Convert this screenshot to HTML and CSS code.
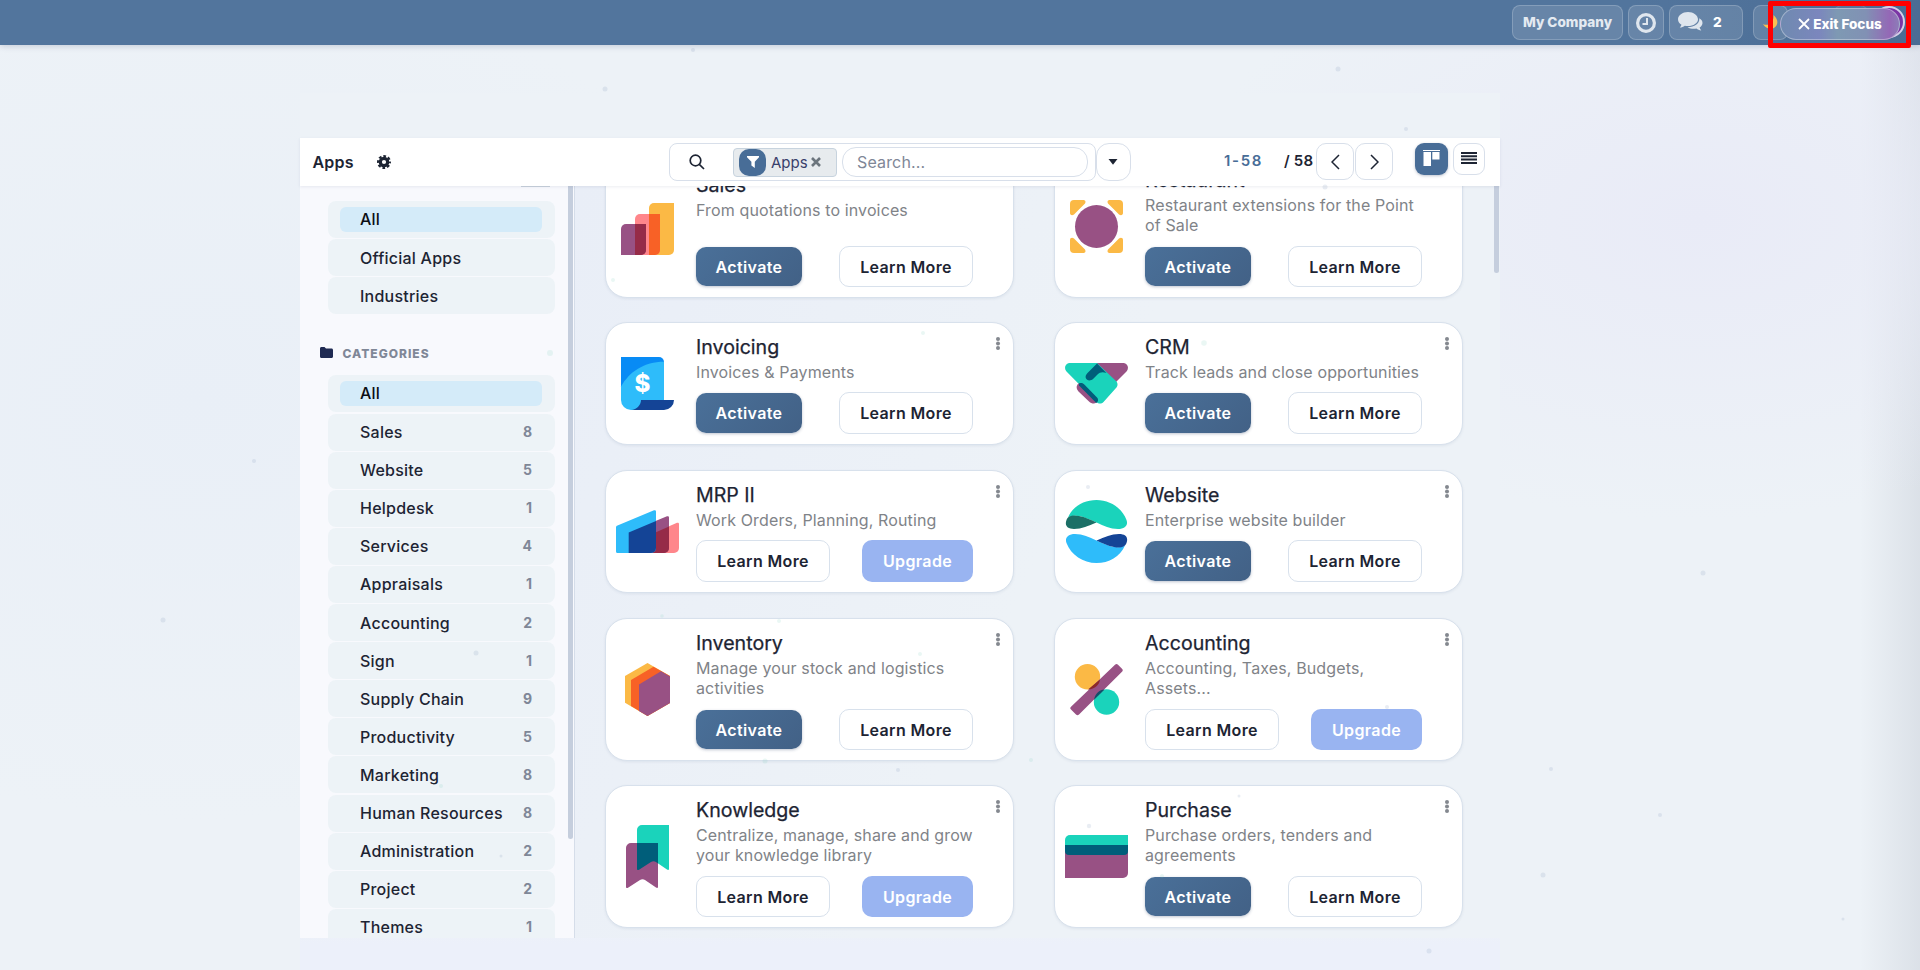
FILE: index.html
```
<!DOCTYPE html>
<html lang="en">
<head>
<meta charset="utf-8">
<title>Apps</title>
<link rel="stylesheet" href="styles.css">
</head>
<body>
<header class="topbar">
  <div class="tb company">My Company</div>
  <div class="tb clock"><svg width="22" height="22" viewBox="0 0 22 22" fill="none" stroke="#dfe6ee"><circle cx="11" cy="11" r="8.4" stroke-width="3.2"/><path d="M12 6v6H7.5" stroke-width="2"/></svg></div>
  <div class="tb chat"><svg width="25" height="20" viewBox="0 0 25 20" fill="#dfe6ee"><path d="M10 0C4.500 0 0 3.300 0 7.300c0 2.300 1.400 4.200 3.500 5.500-.4 1.200-1 2-1.700 2.700 2 0 3.700-.7 5-1.800 1 .2 2.100.4 3.200.4 5.500 0 10-3 10-6.800S15.500 0 10 0z"/><path d="M21.300 6.200c2 1.100 3.200 2.700 3.200 4.700 0 1.900-1.200 3.500-2.900 4.600.3 1 .9 2 1.700 2.900-2 0-3.600-.8-4.900-1.800-3.300.6-6.700 0-8.900-1.400 6.600.1 12.300-3.600 11.800-9z"/></svg><span>2</span></div>
  <div class="tb moon"><svg width="15" height="14" viewBox="0 0 15 14"><path d="M10.500 0c5 4 5.500 11-.5 13.400C6.500 14.600 2 13 0 9c5 2.500 11-.5 10.500-9z" fill="#f9c053"/></svg></div>
  <div class="tb ghost"></div>
  <div class="avatar"></div>
  <div class="exit"><svg width="12" height="12" viewBox="0 0 12 12" stroke="#fff" stroke-width="1.800"><path d="M1 1l10 10M11 1L1 11"/></svg>Exit Focus</div>
  <div class="redbox"></div>
</header>
<main class="stage">
  <div class="app">
    <div class="control">
      <div class="crumb">Apps</div>
      <svg class="cog" width="14" height="14" viewBox="0 0 14 14"><circle cx="7" cy="7" r="3.700" fill="none" stroke="#1d2433" stroke-width="3.200"/><circle cx="7" cy="7" r="5.900" fill="none" stroke="#1d2433" stroke-width="2.200" stroke-dasharray="2.700 1.934" stroke-dashoffset="1.350"/></svg>
      <div class="search">
        <svg class="lens" width="16" height="16" viewBox="0 0 16 16" fill="none" stroke="#1d2433" stroke-width="1.700"><circle cx="6.500" cy="6.500" r="5.300"/><path d="M10.300 10.300l4.700 4.700"/></svg>
        <div class="facet"><span class="funnel"><svg width="12" height="12" viewBox="0 0 12 12"><path d="M0 0h12v1.200L7.800 5.800V12L4.400 9.500V5.800L0 1.200z" fill="#fff"/></svg></span><span class="fname">Apps</span><svg width="10" height="10" viewBox="0 0 10 10" stroke="#6c757d" stroke-width="2.600"><path d="M1 1l8 8M9 1L1 9"/></svg></div>
        <div class="input">Search...</div>
      </div>
      <div class="drop"><svg width="10" height="6" viewBox="0 0 10 6"><path d="M.5 0h9L5 5.800z" fill="#1d2433"/></svg></div>
      <div class="range">1-58</div><div class="total">/ 58</div>
      <div class="nav"><svg width="9" height="16" viewBox="0 0 9 16" fill="none" stroke="#1d2433" stroke-width="1.500"><path d="M8 1L1 8l7 7"/></svg></div>
      <div class="nav"><svg width="9" height="16" viewBox="0 0 9 16" fill="none" stroke="#1d2433" stroke-width="1.500"><path d="M1 1l7 7-7 7"/></svg></div>
      <div class="view on"><svg width="17" height="16" viewBox="0 0 17 16" fill="#fff"><path d="M0 0h17v1H0zM.500 2h7.500v14H.500zM9.300 2h7.200v7.500H9.300z"/></svg></div>
      <div class="view"><svg width="16" height="12" viewBox="0 0 16 12" fill="#1d2433"><path d="M0 0h16v2H0zM0 3.300h16v2H0zM0 6.600h16v2H0zM0 10h16v2H0z"/></svg></div>
    </div>
    <div class="content">
      <aside class="side">
        <i class="edge"></i>
        <div class="cat on"><span>All</span></div>
        <div class="cat"><span>Official Apps</span></div>
        <div class="cat"><span>Industries</span></div>
        <div class="sec"><svg width="13" height="11" viewBox="0 0 13 11"><path d="M0 1.500C0 .6.600 0 1.500 0h3L6 1.500h5.500c.9 0 1.500.600 1.500 1.500v6.500c0 .9-.6 1.500-1.500 1.500h-10C.6 11 0 10.400 0 9.500z" fill="#1f2a52"/></svg>CATEGORIES</div>
        <div class="cat on"><span>All</span></div>
        <div class="cat"><span>Sales</span><b>8</b></div>
        <div class="cat"><span>Website</span><b>5</b></div>
        <div class="cat"><span>Helpdesk</span><b>1</b></div>
        <div class="cat"><span>Services</span><b>4</b></div>
        <div class="cat"><span>Appraisals</span><b>1</b></div>
        <div class="cat"><span>Accounting</span><b>2</b></div>
        <div class="cat"><span>Sign</span><b>1</b></div>
        <div class="cat"><span>Supply Chain</span><b>9</b></div>
        <div class="cat"><span>Productivity</span><b>5</b></div>
        <div class="cat"><span>Marketing</span><b>8</b></div>
        <div class="cat"><span>Human Resources</span><b>8</b></div>
        <div class="cat"><span>Administration</span><b>2</b></div>
        <div class="cat"><span>Project</span><b>2</b></div>
        <div class="cat"><span>Themes</span><b>1</b></div>
        <i class="bar"></i>
      </aside>
      <section class="kanban">
        <i class="bar"></i>
        <article class="card tall grow">
          <svg class="ico" viewBox="0 0 63 63"><path d="M38 8h20v47a5 5 0 0 1-5 5H33V13a5 5 0 0 1 5-5z" fill="#fbb945"/><path d="M24 19h20v36a5 5 0 0 1-5 5H19V24a5 5 0 0 1 5-5z" fill="#ff868b"/><path d="M33 19h11v36a5 5 0 0 1-5 5h-6z" fill="#f86126"/><path d="M10 29h20v26a5 5 0 0 1-5 5H5V34a5 5 0 0 1 5-5z" fill="#985184"/><path d="M19 29h11v26a5 5 0 0 1-5 5h-6z" fill="#962b48"/></svg>
          <div class="body drop5"><h3>Sales</h3><p>From quotations to invoices</p><div class="acts"><a class="go">Activate</a><a class="more">Learn More</a></div></div><i class="dots"></i>
        </article>
        <article class="card tall grow">
          <svg class="ico" viewBox="0 0 63 63"><g fill="#fbb945"><path id="rc" d="M9 5h9c3 0 3 2.500 1.500 4L9 19.500C7 21 5 20 5 18V9a4 4 0 0 1 4-4z"/><use href="#rc" transform="matrix(-1 0 0 1 63 0)"/><use href="#rc" transform="matrix(1 0 0 -1 0 63)"/><use href="#rc" transform="matrix(-1 0 0 -1 63 63)"/></g><circle cx="31.500" cy="31.500" r="24" fill="#fff"/><circle cx="31.500" cy="31.500" r="21.500" fill="#985184"/></svg>
          <div class="body"><h3>Restaurant</h3><p>Restaurant extensions for the Point of Sale</p><div class="acts"><a class="go">Activate</a><a class="more">Learn More</a></div></div><i class="dots"></i>
        </article>
        <article class="card">
          <svg class="ico" viewBox="0 0 63 63"><path d="M5 5h38a5 5 0 0 1 5 5v6L5 46z" fill="#088bf5"/><path d="M5 34.500C13 20 28 9.700 48 9.700V50L20 58h-5A10 10 0 0 1 5 48z" fill="#2ebcfa"/><path d="M25 48h33a10 10 0 0 1-10 10H16c5-1 9-5 9-10z" fill="#144496"/><text x="26.500" y="40" text-anchor="middle" class="dollar">$</text></svg>
          <div class="body"><h3>Invoicing</h3><p>Invoices &amp; Payments</p><div class="acts"><a class="go">Activate</a><a class="more">Learn More</a></div></div><i class="dots"></i>
        </article>
        <article class="card">
          <svg class="ico" viewBox="0 0 63 63"><path d="M31 11h27c4.500 0 6.500 5 3.500 8.500L51 30 31 20z" fill="#985184"/><path d="M5 11h27l19 18c2 2 2 5 0 7L38.500 50c-2 2-5 2-7 0L1.500 19.500C-1.500 16 .5 11 5 11z" fill="#1ad3bb"/><path d="M22.500 21L32 11.500 41.500 21c-4-1.500-6.500-1-9 1.500l-4.500 4.500c-4.500 4-10.500-1-5.500-6z" fill="#005e7a"/><path d="M12.500 32.500c2.500-2.500 5-1.500 7 .5l12 12.500c2.500 2.500 0 6-2.500 6-2 0-3.500-.5-5-2l-10.500-10c-2-2-2.500-5-1-7z" fill="#985184"/><path d="M14 31.500c2-1 4-.3 5.500 1.200L32 45.500c1.800 2 1 4.500-.7 5.500L14 33.500z" fill="#005e7a"/></svg>
          <div class="body"><h3>CRM</h3><p>Track leads and close opportunities</p><div class="acts"><a class="go">Activate</a><a class="more">Learn More</a></div></div><i class="dots"></i>
        </article>
        <article class="card">
          <svg class="ico" viewBox="0 0 63 63"><path d="M40 32l21-9.200c1-.4 2 .2 2 1.200v24a5 5 0 0 1-5 5H36z" fill="#ff868b"/><path d="M13 32l38-15.700c1-.4 2 .2 2 1.200V48a5 5 0 0 1-5 5H13z" fill="#985184"/><path d="M36 34l17-7.500V48a5 5 0 0 1-5 5H36z" fill="#962b48"/><path d="M1.500 25.500L38 10.300c1-.4 2 .2 2 1.200V48a5 5 0 0 1-5 5H1.500A1.500 1.500 0 0 1 0 51.500v-24c0-1 .5-1.600 1.500-2z" fill="#2ebcfa"/><path d="M12.700 32.500L40 21v27a5 5 0 0 1-5 5H12.700z" fill="#144496"/></svg>
          <div class="body"><h3>MRP II</h3><p>Work Orders, Planning, Routing</p><div class="acts"><a class="more">Learn More</a><a class="up">Upgrade</a></div></div><i class="dots"></i>
        </article>
        <article class="card">
          <svg class="ico" viewBox="0 0 63 63"><path d="M3 17.500C8 6 19 0 31.500 0 45 0 57 8 61.500 20c2 5-1.500 9-8.500 9-8 0-14-3-21.500-6.500C21 18 12 13 3 17.500z" fill="#1ad3bb"/><path d="M31.500 22.500C23 26 17 29 9 29c-7 0-9.500-3.500-7.500-9C3.500 15 9 15 14 16c6 1 12 4 17.500 6.500z" fill="#1b6f66"/><path d="M60 45.500C55 57 44 63 31.500 63 18 63 6 55 1.500 43c-2-5 1.500-9 8.500-9 8 0 14 3 21.500 6.500C42 45 51 50 60 45.500z" fill="#2ebcfa"/><path d="M31.500 40.500C40 37 46 34 54 34c7 0 9.500 3.500 7.500 9-2 5-7.500 5-12.500 4-6-1-12-4-17.500-6.500z" fill="#144496"/></svg>
          <div class="body"><h3>Website</h3><p>Enterprise website builder</p><div class="acts"><a class="go">Activate</a><a class="more">Learn More</a></div></div><i class="dots"></i>
        </article>
        <article class="card tall grow">
          <svg class="ico" viewBox="0 0 63 63"><path d="M31.500 5L54 18v27L31.500 58 9 44.700V18z" fill="#fbb945"/><path d="M37.500 8.700L54 18v27L31.500 58 15 48V22z" fill="#f86126"/><path d="M45 13.300l9 5.200V45L31.500 58 23 53V26.500z" fill="#985184"/></svg>
          <div class="body"><h3>Inventory</h3><p>Manage your stock and logistics activities</p><div class="acts"><a class="go">Activate</a><a class="more">Learn More</a></div></div><i class="dots"></i>
        </article>
        <article class="card tall grow">
          <svg class="ico" viewBox="0 0 63 63"><circle cx="22.500" cy="18.700" r="12.700" fill="#fbb945"/><circle cx="41.500" cy="44" r="12.700" fill="#1ad3bb"/><path d="M50 6.700c1-1 2-1 3 0l4 4c1 1 1 2 0 3L14 56.500c-1 1-2 1-3 0l-5-5c-1-1-1-1.800 0-2.800z" fill="#985184"/><path d="M35 21.500c-.5 5-5 9.800-12 9.900z" fill="#8c2a2a"/><path d="M29 41.800c.8-6 5.500-10.300 10.500-10.400z" fill="#12506b"/></svg>
          <div class="body"><h3>Accounting</h3><p>Accounting, Taxes, Budgets, Assets...</p><div class="acts"><a class="more">Learn More</a><a class="up">Upgrade</a></div></div><i class="dots"></i>
        </article>
        <article class="card tall">
          <svg class="ico" viewBox="0 0 63 63"><path d="M26 0h27v44c0 1-1 1.200-2 .6L40 37c-1.500-1-3.500-1-5 0L23 44.700c-1 .5-2 .2-2-.7V5a5 5 0 0 1 5-5z" fill="#1ad3bb"/><path d="M15 18h27v44c0 1-1 1.200-2 .6L29 55c-1.500-1-3.500-1-5 0L12 62.700c-1 .5-2 .2-2-.7V23a5 5 0 0 1 5-5z" fill="#985184"/><path d="M21 18h21v20.500L40 37c-1.500-1-3.500-1-5 0L23 44.700c-1 .5-2 .2-2-.7z" fill="#005e7a"/></svg>
          <div class="body"><h3>Knowledge</h3><p>Centralize, manage, share and grow your knowledge library</p><div class="acts"><a class="more">Learn More</a><a class="up">Upgrade</a></div></div><i class="dots"></i>
        </article>
        <article class="card tall">
          <svg class="ico" viewBox="0 0 63 63"><path d="M0 20h63v28a5 5 0 0 1-5 5H0z" fill="#985184"/><path d="M5 10h58v10H0v-5a5 5 0 0 1 5-5z" fill="#1ad3bb"/><path d="M0 20h63v6a4 4 0 0 1-4 4H4a4 4 0 0 1-4-4z" fill="#005e7a"/></svg>
          <div class="body"><h3>Purchase</h3><p>Purchase orders, tenders and agreements</p><div class="acts"><a class="go">Activate</a><a class="more">Learn More</a></div></div><i class="dots"></i>
        </article>
      </section>
    </div>
  </div>
</main>
<svg class="particles" viewBox="0 0 1920 970"><g fill="#8fa3c4" fill-opacity=".2"><circle cx="605" cy="89" r="2.500"/><circle cx="1338" cy="69" r="2.500"/><circle cx="693" cy="50" r="2"/><circle cx="1406" cy="129" r="2"/><circle cx="1325" cy="187" r="2.500"/><circle cx="254" cy="461" r="2"/><circle cx="163" cy="620" r="2.500"/><circle cx="476" cy="653" r="2.500"/><circle cx="501" cy="856" r="1.500"/><circle cx="1088" cy="487" r="2"/><circle cx="1387" cy="707" r="2"/><circle cx="1089" cy="826" r="2.200"/><circle cx="1239" cy="796" r="1.500"/><circle cx="1429" cy="951" r="2.500"/><circle cx="1543" cy="875" r="2.500"/><circle cx="1703" cy="573" r="2.500"/><circle cx="1551" cy="769" r="2"/><circle cx="1660" cy="815" r="2"/><circle cx="1843" cy="919" r="1.500"/><circle cx="898" cy="770" r="2"/></g><g fill="#7ecbb8" fill-opacity=".16"><circle cx="550" cy="353" r="3"/><circle cx="1204" cy="343" r="2.800"/><circle cx="923" cy="333" r="2"/><circle cx="613" cy="280" r="2"/><circle cx="779" cy="621" r="2"/><circle cx="662" cy="616" r="1.800"/><circle cx="765" cy="761" r="2.500"/><circle cx="1031" cy="760" r="2"/><circle cx="441" cy="786" r="2"/><circle cx="920" cy="654" r="2"/><circle cx="1162" cy="876" r="2"/></g></svg>
</body>
</html>
```
FILE: styles.css
```
* { box-sizing: border-box; }
body { margin: 0; width: 1920px; height: 970px; overflow: hidden; font-family: Inter, "Liberation Sans", sans-serif; color: #1d2433;
  background: radial-gradient(ellipse 520px 300px at 1700px 220px, #e9ebf7, transparent), radial-gradient(ellipse 600px 420px at 200px 400px, #e9eff7, transparent), linear-gradient(90deg, transparent 1860px, rgba(90,100,120,.12)), #edf2f7; }
.topbar { position: relative; z-index: 3; height: 45px; display: flex; align-items: flex-start; padding: 5px 0 0 1512px; gap: 5px; background: linear-gradient(90deg, #52759d 85%, #4b6c94); box-shadow: 0 1px 6px rgba(40,60,100,.22); }
.tb { height: 35px; border: 1px solid rgba(255,255,255,.2); border-radius: 8px; background: rgba(255,255,255,.12); display: flex; align-items: center; justify-content: center; color: #e4eaf1; font-weight: 800; font-size: 13.600px; padding-bottom: 1px; }
.company { width: 111px; }
.clock { width: 36px; padding-bottom: 0; }
.chat { width: 74px; justify-content: flex-start; padding-left: 8px; gap: 10px; }
.chat span { color: #fff; }
.moon { width: 35px; margin-left: 5px; }
.ghost { width: 34px; margin-left: 41px; opacity: .5; }
.avatar { position: absolute; left: 1873px; top: 6px; width: 32px; height: 32px; border-radius: 50%; background: #7b35a5; border: 2px solid #d6cfe8; }
.exit { position: absolute; left: 1780px; top: 8px; width: 120px; height: 32px; border-radius: 16px; border: 1px solid rgba(255,255,255,.35); background: linear-gradient(90deg, #6f8ab0 0, #7b86bd 32%, #7e99b3 48%, #8191b4 72%, #9468b6 92%, #8c7cb8); color: #fff; font-weight: 800; font-size: 13.500px; display: flex; align-items: center; justify-content: center; gap: 3px; }
.redbox { position: absolute; left: 1768px; top: 1px; width: 143px; height: 47px; border: 5px solid #f00; border-radius: 2px; }
.stage { padding: 48px 0 0 300px; }
.app { width: 1200px; height: 877px; padding-top: 45px; background: linear-gradient(180deg, #edf2f7, #edf2f7 95%, #ecf0fa 97%); }
.control { position: relative; z-index: 2; height: 48px; background: #fff; display: flex; align-items: flex-start; padding-top: 5px; box-shadow: 0 1px 3px rgba(40,60,100,.09); }
.crumb { width: 77px; padding: 9px 0 0 12.500px; font-size: 16px; font-weight: 600; letter-spacing: .2px; line-height: 20px; }
.cog { margin-top: 12px; }
.search { margin-left: 278px; width: 427px; height: 38px; border: 1px solid #d8dfea; border-radius: 8px; display: flex; align-items: center; padding: 0 7px 0 19px; }
.lens { margin-right: 28px; }
.facet { width: 104px; height: 29px; border: 1px solid #c7d3de; border-radius: 4px; background: #e7ebee; display: flex; align-items: center; padding-left: 5px; }
.funnel { width: 27px; height: 27px; border-radius: 10px; background: #486d97; display: flex; align-items: center; justify-content: center; }
.fname { width: 35px; margin: 0 5px 0 5px; font-size: 15px; color: #39406b; }
.input { margin-left: 5px; width: 246px; height: 30px; border: 1px solid #d8dfea; border-radius: 14px; padding-left: 14px; font-size: 16px; letter-spacing: .15px; line-height: 29px; color: #7f8797; }
.drop { width: 35px; height: 38px; border: 1px solid #d8dfea; border-radius: 13px; display: flex; align-items: center; justify-content: center; padding-right: 2px; }
.range { width: 60px; margin-left: 93px; font-size: 15px; font-weight: 600; letter-spacing: 1.700px; color: #486d97; line-height: 35px; }
.total { width: 32px; font-size: 15px; font-weight: 600; letter-spacing: .2px; line-height: 35px; white-space: nowrap; }
.nav { width: 38px; height: 37px; margin-right: 1px; border: 1px solid #d8dfea; border-radius: 10px; display: flex; align-items: center; justify-content: center; }
.view { width: 32px; height: 32px; border: 1px solid #d8dfea; border-radius: 9px; display: flex; align-items: center; justify-content: center; padding-bottom: 2px; }
.view.on { width: 33px; margin: 0 5px 0 21px; border: 0; background: #486d97; box-shadow: 0 1px 3px rgba(40,60,100,.3); }
.content { display: flex; height: 752px; }
.side { position: relative; width: 275px; padding: 15px 19px 0 28px; background: #f8f9fd; border-right: 1px solid #d5dde9; overflow: hidden; }
.edge { position: absolute; left: 221px; top: 0; width: 29px; height: 1px; background: #c9d2dd; }
.cat { height: 37px; margin-bottom: 1.1px; border-radius: 8px; background: #edf3f7; display: flex; align-items: center; justify-content: space-between; padding: 0 23px 0 32px; font-size: 16px; font-weight: 500; letter-spacing: .23px; }
.cat b { font-size: 14px; font-weight: 700; letter-spacing: 0; color: #7f8797; margin-top: -1px; }
.cat.on { padding: 6px 13px 6px 12px; color: #0b0e14; }
.cat.on span { flex: 1; height: 25px; line-height: 25px; padding-left: 20px; background: #d4ebf9; border-radius: 6px; }
.sec { height: 60.200px; margin-left: -8px; display: flex; align-items: center; gap: 9.500px; padding-top: 16px; font-size: 12px; font-weight: 800; letter-spacing: 1px; color: #7f8797; }
.sec svg { margin-top: -1px; }
.bar { position: absolute; right: 1px; top: 0; width: 5px; height: 653px; border-radius: 0 0 3px 3px; background: #c5cedd; }
.kanban { position: relative; flex: 1; overflow: hidden; display: grid; grid-template-columns: 409px 409px; grid-template-rows: 142px 123px 123px 142px 143px; column-gap: 40px; row-gap: 25px; padding-left: 30px; align-content: start; background: linear-gradient(115deg, #e9eef7, #edf2f7 50%); }
.kanban .bar { height: 87px; }
.card { position: relative; top: -31px; border: 1px solid #d8e1ec; border-radius: 22px; background: #fff; box-shadow: 0 1px 3px rgba(40,60,100,.08); display: flex; align-items: center; padding-left: 10px; }
.card.grow { margin-bottom: -1px; }
.ico { width: 63px; height: 63px; flex: none; }
.dollar { font: 800 24px Inter, sans-serif; fill: #fff; }
.body { margin-left: 17px; width: 277px; height: 100%; display: flex; flex-direction: column; padding: 12px 0 10px; }
.body.drop5 { padding-top: 17px; }
.body h3 { margin: 0; font-size: 19.600px; line-height: 24px; font-weight: 400; -webkit-text-stroke: .25px #1d2433; }
.body p { margin: 3px 0 0; font-size: 16px; letter-spacing: .13px; line-height: 20px; color: #7f8388; }
.acts { margin-top: auto; display: flex; justify-content: space-between; align-items: center; height: 42px; }
.acts a { display: flex; align-items: center; justify-content: center; height: 42px; border-radius: 10px; font-size: 16px; font-weight: 600; letter-spacing: .36px; white-space: nowrap; }
.acts .go { width: 106px; height: 40px; color: #fff; background: linear-gradient(135deg, #4a7099, #426186); box-shadow: 0 1px 3px rgba(40,60,100,.3); }
.acts .more { width: 134px; border: 1px solid #d8e1ec; }
.acts .up { width: 111px; color: #fff; background: #99b4f1; }
.tall .acts, .tall .acts a { height: 41px; }
.tall .acts .go { height: 39px; }
.dots { position: absolute; right: 13px; top: 14px; width: 4px; height: 4px; border-radius: 50%; background: #84888f; box-shadow: 0 4.500px #84888f, 0 9px #84888f; }
.particles { position: absolute; left: 0; top: 0; width: 1920px; height: 970px; z-index: 2; }
```
